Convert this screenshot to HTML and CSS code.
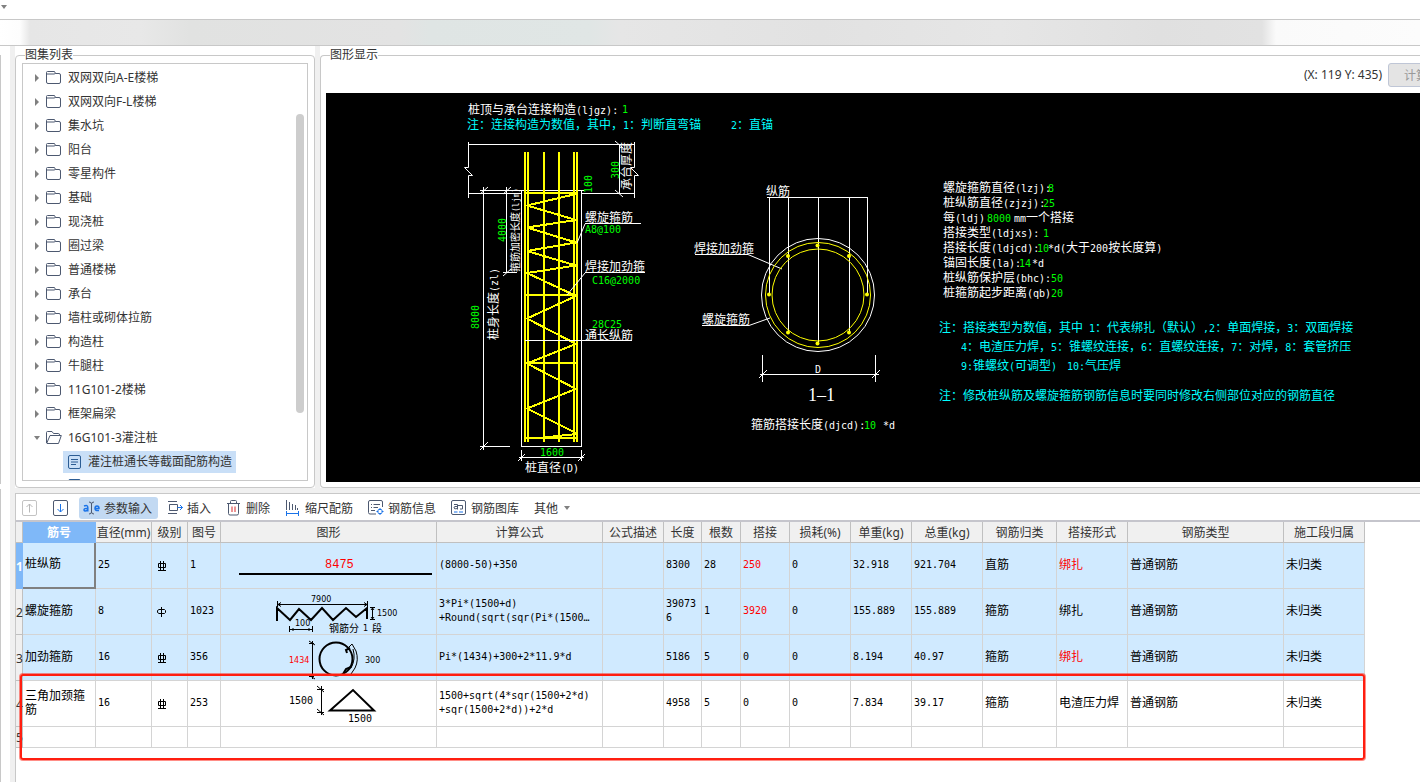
FILE: index.html
```html
<!DOCTYPE html>
<html lang="zh-CN">
<head>
<meta charset="utf-8">
<title>图集列表</title>
<link rel="stylesheet" href="styles.css">
</head>
<body>
<svg class="defs" aria-hidden="true">
  <symbol id="folder" viewBox="0 0 15 13"><path d="M.5 11V1.500Q.5.5 1.500.5H8.500L9.500 2.500H13Q14.500 2.500 14.500 4V11Q14.500 12.500 13 12.500H2Q.5 12.500.5 11ZM.5 3H8L9.500 2.500" fill="none" stroke="#4d5970"/></symbol>
  <symbol id="folder-open" viewBox="0 0 16 13"><path d="M.5 12V1.500Q.5.5 1.500.5H6L7.500 2.500H12.500Q13.500 2.500 13.500 4M.7 12.300L4 4.500H15.300L12.500 12.500H1" fill="none" stroke="#4d5970"/></symbol>
  <symbol id="page" viewBox="0 0 13 14"><rect x=".5" y=".5" width="12" height="13" rx="1.500" fill="none" stroke="#2c5d94"/><path d="M3 4.500H10M3 7H10M3 9.500H8" stroke="#2c5d94"/></symbol>
  <symbol id="right" viewBox="0 0 4 8"><path d="M0 0L4 4L0 8Z" fill="#808080"/></symbol>
  <symbol id="down" viewBox="0 0 6 4"><path d="M0 0H6L3 4Z" fill="#808080"/></symbol>
  <symbol id="grade-3" viewBox="0 0 10 10"><path d="M3.500 0V9.500M6.500 0V9.500M1 9.500H9M1.500 2.500H8.500V6.500H1.500Z" fill="none" stroke="#000"/></symbol>
  <symbol id="grade-1" viewBox="0 0 10 10"><path d="M4.500 0V10M2 2.500H7.500L8.500 3.500V5.500L7.500 6.500H2L.5 5.500V3.500Z" fill="none" stroke="#000"/></symbol>
</svg>

<header class="titlebar"><svg width="6" height="4"><use href="#down"/></svg></header>
<div class="ribbon"></div>

<div class="app">
  <aside class="gutter"><div></div><div></div></aside>
  <main class="work">
    <div class="upper">
      <div class="panel panel-list">
        <fieldset class="group">
          <legend>图集列表</legend>
          <div class="tree">
            <ul>
              <li><button><svg width="4" height="8"><use href="#right"/></svg><svg width="15" height="13"><use href="#folder"/></svg>双网双向A-E楼梯</button></li>
              <li><button><svg width="4" height="8"><use href="#right"/></svg><svg width="15" height="13"><use href="#folder"/></svg>双网双向F-L楼梯</button></li>
              <li><button><svg width="4" height="8"><use href="#right"/></svg><svg width="15" height="13"><use href="#folder"/></svg>集水坑</button></li>
              <li><button><svg width="4" height="8"><use href="#right"/></svg><svg width="15" height="13"><use href="#folder"/></svg>阳台</button></li>
              <li><button><svg width="4" height="8"><use href="#right"/></svg><svg width="15" height="13"><use href="#folder"/></svg>零星构件</button></li>
              <li><button><svg width="4" height="8"><use href="#right"/></svg><svg width="15" height="13"><use href="#folder"/></svg>基础</button></li>
              <li><button><svg width="4" height="8"><use href="#right"/></svg><svg width="15" height="13"><use href="#folder"/></svg>现浇桩</button></li>
              <li><button><svg width="4" height="8"><use href="#right"/></svg><svg width="15" height="13"><use href="#folder"/></svg>圈过梁</button></li>
              <li><button><svg width="4" height="8"><use href="#right"/></svg><svg width="15" height="13"><use href="#folder"/></svg>普通楼梯</button></li>
              <li><button><svg width="4" height="8"><use href="#right"/></svg><svg width="15" height="13"><use href="#folder"/></svg>承台</button></li>
              <li><button><svg width="4" height="8"><use href="#right"/></svg><svg width="15" height="13"><use href="#folder"/></svg>墙柱或砌体拉筋</button></li>
              <li><button><svg width="4" height="8"><use href="#right"/></svg><svg width="15" height="13"><use href="#folder"/></svg>构造柱</button></li>
              <li><button><svg width="4" height="8"><use href="#right"/></svg><svg width="15" height="13"><use href="#folder"/></svg>牛腿柱</button></li>
              <li><button><svg width="4" height="8"><use href="#right"/></svg><svg width="15" height="13"><use href="#folder"/></svg>11G101-2楼梯</button></li>
              <li><button><svg width="4" height="8"><use href="#right"/></svg><svg width="15" height="13"><use href="#folder"/></svg>框架扁梁</button></li>
              <li><button class="open"><svg width="6" height="4"><use href="#down"/></svg><svg width="16" height="13"><use href="#folder-open"/></svg>16G101-3灌注桩</button></li>
              <li><button class="leaf selected"><svg width="13" height="14"><use href="#page"/></svg>灌注桩通长等截面配筋构造</button></li>
              <li><button class="leaf" aria-label="下一项"><svg width="13" height="14"><use href="#page"/></svg></button></li>
            </ul>
            <div class="thumb"></div>
          </div>
        </fieldset>
      </div>
      <div class="panel panel-view">
        <fieldset class="group group-view">
          <legend>图形显示</legend>
          <div class="view-head"><output>(X: 119 Y: 435)</output><button disabled>计算</button></div>
          <div class="canvas">
            <svg class="cad" width="1094" height="389" viewBox="326 93 1094 389">
              <g class="w line">
                <path d="M468.500 142V167.500H464.500L472.500 175.500H468.500V198M634.500 142V167.500H630.500L638.500 175.500H634.500V198M468 144.500H635M468 193.500H522M581 193.500H635"/>
                <path d="M521.500 446.500V190.500H581.500V446.500M480 190.500H584M480 446.500H510M521 446.500H582M483.500 187V450M506.500 187V272.500M503 272.500H517M619.500 144V193"/>
                <path d="M480 194L488 187M503 194L511 187M480 450L488 442M503 276L511 269M615 141L623 148M615 190L623 197"/>
                <path d="M585 223.500H641M585 272.500H645"/>
                <path d="M519 457.500H584M521.500 450V461M581.500 450V461M518 461L525 454M578 461L585 454"/>
              </g>
              <g class="y bar">
                <path d="M525 152V442M528 152V442M544 152V442M559 152V442M574 152V442M577 152V442"/>
                <path d="M524 193H578M524 295H578M524 363H578M524 438H578"/>
                <path d="M576 194L527 205.500L576 220L527 227.500L576 242.500L527 251L576 265.500L527 273L576 296L527 318.500L576 344L527 363.500L576 389L527 408.500L576 433M577 434L538 438"/>
              </g>
              <path class="w line" d="M525 340.500H632M577 243L585 224M567 295L585 273"/>
              <g class="w line">
                <path d="M767 197.500H868M769.500 197V294M788.500 197V332M818.500 197V343M849.500 197V332M867.500 197V294"/>
                <path d="M695 254.500H748L782 269M702 325.500H749L770 318"/>
                <path d="M762.500 355V382M875.500 355V382M760 374.500H879M759 378L767 370M872 378L880 370"/>
                <circle cx="818" cy="295" r="56.500"/>
              </g>
              <g class="y line"><circle cx="818" cy="295" r="52.500"/><circle cx="818" cy="295" r="46"/></g>
              <g class="dots"><circle cx="817.500" cy="245.500" r="2"/><circle cx="788" cy="256" r="2"/><circle cx="849" cy="256" r="2"/><circle cx="769" cy="294.500" r="2"/><circle cx="867" cy="294.500" r="2"/><circle cx="788" cy="332.500" r="2"/><circle cx="849" cy="332.500" r="2"/><circle cx="817.500" cy="343.500" r="2"/></g>
              <g class="tw">
                <text x="468" y="114">桩顶与承台连接构造<tspan class="n">(ljgz):</tspan></text>
                <text transform="translate(631 190) rotate(-90)">承台厚度</text>
                <text class="small" transform="translate(519 272) rotate(-90)">箍筋加密长度<tspan class="n">(ljm)</tspan></text>
                <text transform="translate(498 340) rotate(-90)">桩身长度<tspan class="n">(zl)</tspan></text>
                <text x="585" y="222">螺旋箍筋</text>
                <text x="585" y="271">焊接加劲箍</text>
                <text x="585" y="340">通长纵筋</text>
                <text x="525" y="472">桩直径<tspan class="n">(D)</tspan></text>
                <text x="766" y="196">纵筋</text>
                <text x="694" y="253">焊接加劲箍</text>
                <text x="702" y="324">螺旋箍筋</text>
                <text x="815" y="373" class="n">D</text>
                <text x="808" y="401" class="title">1–1</text>
                <text x="751" y="429">箍筋搭接长度<tspan class="n">(djcd):</tspan></text>
                <text x="883" y="429" class="n">*d</text>
                <text x="943" y="192">螺旋箍筋直径<tspan class="n">(lzj):</tspan></text>
                <text x="943" y="207">桩纵筋直径<tspan class="n">(zjzj):</tspan></text>
                <text x="943" y="222">每<tspan class="n">(ldj)</tspan></text>
                <text x="1014" y="222"><tspan class="n">mm</tspan>一个搭接</text>
                <text x="943" y="237">搭接类型<tspan class="n">(ldjxs):</tspan></text>
                <text x="943" y="252">搭接长度<tspan class="n">(ldjcd):</tspan></text>
                <text x="1048" y="252"><tspan class="n">*d(</tspan>大于<tspan class="n">200</tspan>按长度算<tspan class="n">)</tspan></text>
                <text x="943" y="267">锚固长度<tspan class="n">(la):</tspan></text>
                <text x="1032" y="267" class="n">*d</text>
                <text x="943" y="282">桩纵筋保护层<tspan class="n">(bhc):</tspan></text>
                <text x="943" y="297">桩箍筋起步距离<tspan class="n">(qb)</tspan></text>
              </g>
              <g class="tg">
                <text x="622" y="113">1</text>
                <text transform="translate(592 193) rotate(-90)">100</text>
                <text transform="translate(619 179) rotate(-90)">300</text>
                <text transform="translate(506 242) rotate(-90)">4000</text>
                <text transform="translate(479 329) rotate(-90)">8000</text>
                <text x="585" y="233">A8@100</text>
                <text x="592" y="284">C16@2000</text>
                <text x="592" y="328">28C25</text>
                <text x="540" y="456">1600</text>
                <text x="864" y="429">10</text>
                <text x="1048" y="192">8</text>
                <text x="1043" y="207">25</text>
                <text x="987" y="222">8000</text>
                <text x="1043" y="237">1</text>
                <text x="1037" y="252">10</text>
                <text x="1019" y="267">14</text>
                <text x="1051" y="282">50</text>
                <text x="1051" y="297">20</text>
              </g>
              <g class="tc">
                <text x="467" y="129">注：连接构造为数值，其中，<tspan class="n">1</tspan>：判断直弯锚</text>
                <text x="731" y="129"><tspan class="n">2</tspan>：直锚</text>
                <text x="939" y="332">注：搭接类型为数值，其中<tspan class="n"> 1</tspan>：代表绑扎（默认）<tspan class="n">,2</tspan>：单面焊接，<tspan class="n">3</tspan>：双面焊接</text>
                <text x="961" y="351"><tspan class="n">4</tspan>：电渣压力焊，<tspan class="n">5</tspan>：锥螺纹连接，<tspan class="n">6</tspan>：直螺纹连接，<tspan class="n">7</tspan>：对焊，<tspan class="n">8</tspan>：套管挤压</text>
                <text x="961" y="370"><tspan class="n">9:</tspan>锥螺纹<tspan class="n">(</tspan>可调型<tspan class="n">)</tspan></text>
                <text x="1067" y="370"><tspan class="n">10:</tspan>气压焊</text>
                <text x="939" y="400">注：修改桩纵筋及螺旋箍筋钢筋信息时要同时修改右侧部位对应的钢筋直径</text>
              </g>
            </svg>
          </div>
        </fieldset>
      </div>
    </div>

    <section class="lower">
      <nav class="toolbar">
        <button class="square" aria-label="上移" disabled><svg width="16" height="16"><path d="M7.500 12.500V4M4.500 7L7.500 4L10.500 7" fill="none" stroke="#b8b8b8"/><rect x=".5" y=".5" width="14" height="15" rx="1.500" fill="none" stroke="#c3c3c3"/></svg></button>
        <button class="square" aria-label="下移"><svg width="16" height="16"><path d="M7.500 4V12M4.500 9L7.500 12L10.500 9" fill="none" stroke="#1a73e8"/><rect x=".5" y=".5" width="14" height="15" rx="1.500" fill="none" stroke="#4d5970"/></svg></button>
        <button class="active"><svg width="17" height="16"><path d="M6 2Q8.500 2 8.500 4Q8.500 2 11 2M8.500 4V12M6 14Q8.500 14 8.500 12Q8.500 14 11 14" fill="none" stroke="#4d5970"/><path d="M1 6Q4.800 4.500 4.800 7.500V11.500M4.800 8.500Q1 8 1 10Q1.500 12 4.800 10M12 8.500H16Q16 6 14 6Q12 6 12 8.500Q12 11 16 10.500" fill="none" stroke="#1a73e8" stroke-width="1.500"/></svg>参数输入</button>
        <button><svg width="16" height="16"><path d="M10 1.500H1M2.500 4.500H10.500V10.500H2.500V4.500M1 13.500H10" fill="none" stroke="#4d5970"/><path d="M10.500 7.500H15.500M13 5L15.500 7.500L13 10" fill="none" stroke="#1a73e8"/></svg>插入</button>
        <button><svg width="16" height="16"><path d="M1 3.500H14M4.500 3V1.500Q4.500.5 5.500.5H9.500Q10.500.5 10.500 1.500V3M2.500 4V13.500Q2.500 15 4 15H11Q12.500 15 12.500 13.500V4" fill="none" stroke="#4d5970"/><path d="M6 6.500V12M9 6.500V12" stroke="#d92b2b"/></svg>删除</button>
        <button><svg width="16" height="16"><path d="M1.500 0V10M4.500 2V10M7.500 4V10M10.500 5V10M12.500 8V10" stroke="#4d5970"/><path d="M1.500 11V16M13.500 11V16M2 13.500H13" stroke="#1a73e8"/></svg>缩尺配筋</button>
        <button><svg width="16" height="16"><path d="M14.500 7V2Q14.500.5 13 .5H2Q.5.5.5 2V12.500Q.5 14 2 14H8M3 4.500H4M5.500 4.500H12M3 7.500H4M5.500 7.500H10M3 10.500H7" fill="none" stroke="#4d5970"/><path d="M12 8V15M8.500 11.500H15.500" stroke="#1a73e8"/><rect x="10" y="9.500" width="4" height="4" rx="1" fill="#fff" stroke="#1a73e8"/></svg>钢筋信息</button>
        <button><svg width="16" height="16"><rect x=".5" y=".5" width="14" height="14" rx="1.500" fill="none" stroke="#4d5970"/><path d="M3 4.500H6.500V9.500M6.500 6.500H4Q3 6.500 3 8Q3 9.500 6.500 8.500M6.500 5.500H11.500V9H9" fill="none" stroke="#4d5970"/><path d="M3 12H6.500M8 12H12" stroke="#1a73e8"/></svg>钢筋图库</button>
        <button class="more">其他<svg width="6" height="4"><use href="#down"/></svg></button>
      </nav>
      <div class="grid-area">
        <div class="grid-wrap">
          <table>
            <colgroup><col class="c7"><col class="c73"><col class="c56"><col class="c36"><col class="c33"><col class="c216"><col class="c166"><col class="c61"><col class="c38"><col class="c39"><col class="c49"><col class="c61"><col class="c61"><col class="c71"><col class="c74"><col class="c71"><col class="c156"><col class="c81"></colgroup>
            <thead><tr><th></th><th class="on">筋号</th><th>直径(mm)</th><th>级别</th><th>图号</th><th>图形</th><th>计算公式</th><th>公式描述</th><th>长度</th><th>根数</th><th>搭接</th><th>损耗(%)</th><th>单重(kg)</th><th>总重(kg)</th><th>钢筋归类</th><th>搭接形式</th><th>钢筋类型</th><th>施工段归属</th></tr></thead>
            <tbody>
              <tr class="blue"><th class="on">1</th><td class="zh current">桩纵筋</td><td>25</td><td class="grade"><svg width="10" height="10"><use href="#grade-3"/></svg></td><td>1</td>
                <td class="shape"><svg width="215" height="45" viewBox="221 543 215 45"><path class="k thick" d="M239 574H432"/><text x="325" y="568" class="big red">8475</text></svg></td>
                <td>(8000-50)+350</td><td></td><td>8300</td><td>28</td><td class="red">250</td><td>0</td><td>32.918</td><td>921.704</td><td class="zh">直筋</td><td class="zh red">绑扎</td><td class="zh">普通钢筋</td><td class="zh">未归类</td></tr>
              <tr class="blue"><th>2</th><td class="zh">螺旋箍筋</td><td>8</td><td class="grade"><svg width="10" height="10"><use href="#grade-1"/></svg></td><td>1023</td>
                <td class="shape"><svg width="215" height="45" viewBox="221 589 215 45"><path class="k thick" d="M277 621V608L290 620L299 609L311 620L322 608L333 620L346 608L356 617L367 608V619"/><path class="k" d="M277.500 601V607M367.500 601V607M278 604.500H367M281 602.500L278 604.500L281 606.500M364 602.500L367 604.500L364 606.500M370 607.500H375M370 619.500H375M372.500 608V619M371 610L372.500 608L374 610M371 617L372.500 619L374 617M289.500 626V632M312.500 626V632M290 629.500H312M293 628V631M309 628V631"/><text x="311" y="602">7900</text><text x="377" y="616">1500</text><text x="295" y="626">100</text><text x="329" y="632" class="cn">钢筋分</text><text x="363" y="631">1</text><text x="372" y="632" class="cn">段</text></svg></td>
                <td>3*Pi*(1500+d)<br>+Round(sqrt(sqr(Pi*(1500…</td><td></td><td>390736</td><td>1</td><td class="red">3920</td><td>0</td><td>155.889</td><td>155.889</td><td class="zh">箍筋</td><td class="zh">绑扎</td><td class="zh">普通钢筋</td><td class="zh">未归类</td></tr>
              <tr class="blue"><th>3</th><td class="zh">加劲箍筋</td><td>16</td><td class="grade"><svg width="10" height="10"><use href="#grade-3"/></svg></td><td>356</td>
                <td class="shape"><svg width="215" height="45" viewBox="221 635 215 45"><circle class="k thick" cx="336" cy="659" r="16.500"/><path class="k thick" d="M350 648L346 650L347 653M351 667L346 669L343 674"/><path class="k" d="M312.500 641V679M309 641L315 645M309 675L315 679M309 643.500H314M309 676.500H314M349 647L352 644L356 651Q359 660 355 668L351 674M353 649Q356 659 351 668"/><text x="289" y="663" class="red">1434</text><text x="365" y="663">300</text></svg></td>
                <td>Pi*(1434)+300+2*11.9*d</td><td></td><td>5186</td><td>5</td><td>0</td><td>0</td><td>8.194</td><td>40.97</td><td class="zh">箍筋</td><td class="zh red">绑扎</td><td class="zh">普通钢筋</td><td class="zh">未归类</td></tr>
              <tr><th>4</th><td class="zh">三角加颈箍筋</td><td>16</td><td class="grade"><svg width="10" height="10"><use href="#grade-3"/></svg></td><td>253</td>
                <td class="shape"><svg width="215" height="45" viewBox="221 681 215 45"><path class="k thick" d="M330 710.500L353 690L374 710.500Z"/><path class="k" d="M321.500 686V715M317 689.500H324M317 712.500H324M317 686L324 692M317 709L324 715"/><text x="289" y="704" class="mid">1500</text><text x="348" y="722" class="mid">1500</text></svg></td>
                <td>1500+sqrt(4*sqr(1500+2*d)<br>+sqr(1500+2*d))+2*d</td><td></td><td>4958</td><td>5</td><td>0</td><td>0</td><td>7.834</td><td>39.17</td><td class="zh">箍筋</td><td class="zh">电渣压力焊</td><td class="zh">普通钢筋</td><td class="zh">未归类</td></tr>
              <tr class="last"><th>5</th><td></td><td></td><td></td><td></td><td></td><td></td><td></td><td></td><td></td><td></td><td></td><td></td><td></td><td></td><td></td><td></td><td></td></tr>
            </tbody>
          </table>
          <div class="mark"></div>
        </div>
      </div>
    </section>
  </main>
</div>
</body>
</html>
```
FILE: styles.css
```css
* { box-sizing: border-box; }

body {
  margin: 0;
  height: 100vh;
  display: flex;
  flex-direction: column;
  overflow: hidden;
  background: #fff;
  color: #333;
  font: 12px/16px "Noto Sans", "Noto Sans CJK SC", sans-serif;
}

button {
  margin: 0;
  padding: 0;
  border: 0;
  background: none;
  color: inherit;
  font: inherit;
}

svg { display: block; flex: none; }
.defs { position: absolute; width: 0; height: 0; }

.titlebar {
  height: 20px;
  padding: 5px 1px;
  border-bottom: 1px solid #c8c8c8;
}

.ribbon {
  height: 26px;
  border-bottom: 1px solid #c8c8c8;
  background: linear-gradient(90deg, #fff 0, #fdfdfd 20px, #e6e6e6 30px, #e8e8e8 140px, #e1e2e1 190px, #e3e3e3 400px, #dfe5e4 430px, #e0e6e5 590px, #e6e6e6 620px, #e2e2e2 820px, #e6e6e6 1000px, #e0e0e0 1160px, #e2e2e2 1262px, #fafafa 1276px, #fcfcfc 100%);
}

.app {
  flex: 1;
  min-height: 0;
  display: flex;
  background: #f0f0f0;
}

.gutter {
  width: 10px;
  flex: none;
  display: flex;
  flex-direction: column;
  gap: 5px;
  padding-top: 9px;
  background: #fff;
}
.gutter div { border-left: 1px solid #c8c8c8; flex: 1; }
.gutter div:first-child { flex: none; height: 59%; }

.work {
  flex: 1;
  min-width: 0;
  margin-left: 5px;
  display: flex;
  flex-direction: column;
  gap: 5px;
}

.upper { display: flex; gap: 5px; }

.panel { display: flex; padding-top: 1px; background: #fff; }
.panel-list { width: 300px; flex: none; }
.panel-view { flex: 1; min-width: 0; }

.group {
  flex: 1;
  min-width: 0;
  margin: 0;
  padding: 0 6px 6px;
  border: 1px solid #c8c8c8;
  border-radius: 4px;
  display: flex;
  flex-direction: column;
}
.group legend { margin-left: 3px; padding: 0; line-height: 16px; }
.group-view { padding: 0 0 5px 5px; border-right: 0; border-radius: 4px 0 0 4px; }
.group-view legend { margin-left: 4px; }

.tree {
  position: relative;
  flex: 1;
  contain: size;
  overflow: hidden;
  border: 1px solid #c8c8c8;
}
.tree ul { margin: 0; padding: 2px 0 0; list-style: none; }
.tree li { height: 24px; display: flex; align-items: center; }
.tree button {
  display: flex;
  align-items: center;
  gap: 7px;
  height: 22px;
  padding-left: 12px;
}
.tree .open { gap: 6px; padding-left: 11px; }
.tree .leaf { margin-left: 40px; padding: 0 4px 0 5px; }
.tree .selected { background: #c9dff7; }
.tree button svg { margin-top: -1px; }
.thumb {
  position: absolute;
  top: 12%;
  right: 3px;
  width: 8px;
  height: 72%;
  border-radius: 4px;
  background: #cdcdcd;
}

.view-head {
  height: 30px;
  margin-right: -24px;
  display: flex;
  justify-content: flex-end;
  align-items: flex-start;
  gap: 6px;
  line-height: 24px;
}
.view-head button {
  width: 56px;
  height: 24px;
  border: 1px solid #bfc6d6;
  border-radius: 3px;
  background: #e4e4e4;
  color: #999;
}

.canvas { overflow: hidden; background: #000; }

.line { fill: none; stroke-width: 1; }
.bar { fill: none; stroke-width: 2; shape-rendering: crispEdges; }
.w { stroke: #fff; }
.y { stroke: #ff0; }
.dots { fill: #ff0; }
.cad text { font: 12px "Noto Sans CJK SC", sans-serif; white-space: pre; }
.cad .n, .cad .tg text { font: 10px "DejaVu Sans Mono", monospace; }
.cad .small { font-size: 10px; }
.cad .small .n { font-size: 8px; }
.cad .title { font: 18px "Liberation Serif", serif; }
.tw { fill: #fff; }
.tg { fill: #0f0; }
.tc { fill: #0ff; }

.lower {
  flex: 1;
  min-height: 0;
  display: flex;
  flex-direction: column;
  border: solid #c8c8c8;
  border-width: 1px 0 0 1px;
  background: #fff;
}

.toolbar {
  display: flex;
  align-items: center;
  gap: 5px;
  height: 28px;
  padding: 3px 1px 1px;
  border-bottom: 2px solid #c5c5cc;
}
.toolbar button {
  display: flex;
  align-items: center;
  gap: 4px;
  height: 22px;
  padding: 1px 6px 0 4px;
  border-radius: 3px;
}
.toolbar svg { margin-top: -1px; }
.toolbar .square { padding: 0 5px; }
.toolbar .active { background: #c2d9f2; }
.toolbar .more { gap: 6px; }

.grid-area { flex: 1; min-height: 0; overflow: hidden; }
.grid-wrap { position: relative; width: max-content; }

table { width: 1349px; table-layout: fixed; border-collapse: separate; border-spacing: 0; }
.c7 { width: 7px; } .c73 { width: 73px; } .c56 { width: 56px; } .c36 { width: 36px; }
.c33 { width: 33px; } .c216 { width: 216px; } .c166 { width: 166px; } .c61 { width: 61px; }
.c38 { width: 38px; } .c39 { width: 39px; } .c49 { width: 49px; } .c71 { width: 71px; }
.c74 { width: 74px; } .c156 { width: 156px; } .c81 { width: 81px; }

th, td { padding: 0; border: solid #d4d4d4; border-width: 0 1px 1px 0; }
th {
  height: 21px;
  padding-top: 2px;
  border-color: #c0c0c0;
  background: #f0f0f0;
  font-weight: 400;
  line-height: 16px;
  white-space: nowrap;
}
th.on { background: #7fb8f8; color: #fff; font-weight: 700; border-color: #7fb8f8; }
td {
  height: 46px;
  padding: 0 2px 2px;
  color: #000;
  font: 10px/14px "DejaVu Sans Mono", monospace;
  word-break: break-all;
}
td.zh { padding: 0 2px 4px; font: 12px/14px "Noto Sans CJK SC", sans-serif; }
.blue td { background: #d0eaff; }
.last td { height: 21px; }
td.current { border-right: 2px solid #808080; border-bottom: 2px solid #808080; }
td.grade { padding: 0 0 0 5px; }
td.shape { padding: 0; }
td.red { color: #f00; }

.k { fill: none; stroke: #000; }
.thick { stroke-width: 2; }
.shape text { font: 8px "DejaVu Sans", sans-serif; }
.shape .cn { font: 10px "Noto Sans CJK SC", sans-serif; }
.shape .big { font: 12px "Liberation Mono", monospace; }
.shape .mid { font: 10px "DejaVu Sans Mono", monospace; }
.shape .red { fill: #f00; }

.mark {
  position: absolute;
  top: 152px;
  right: 0;
  bottom: -12px;
  left: 4px;
  border: 2px solid #ff1e10;
  border-radius: 3px;
  box-shadow: 0 0 0 1px rgba(255, 30, 16, .5);
}
```
